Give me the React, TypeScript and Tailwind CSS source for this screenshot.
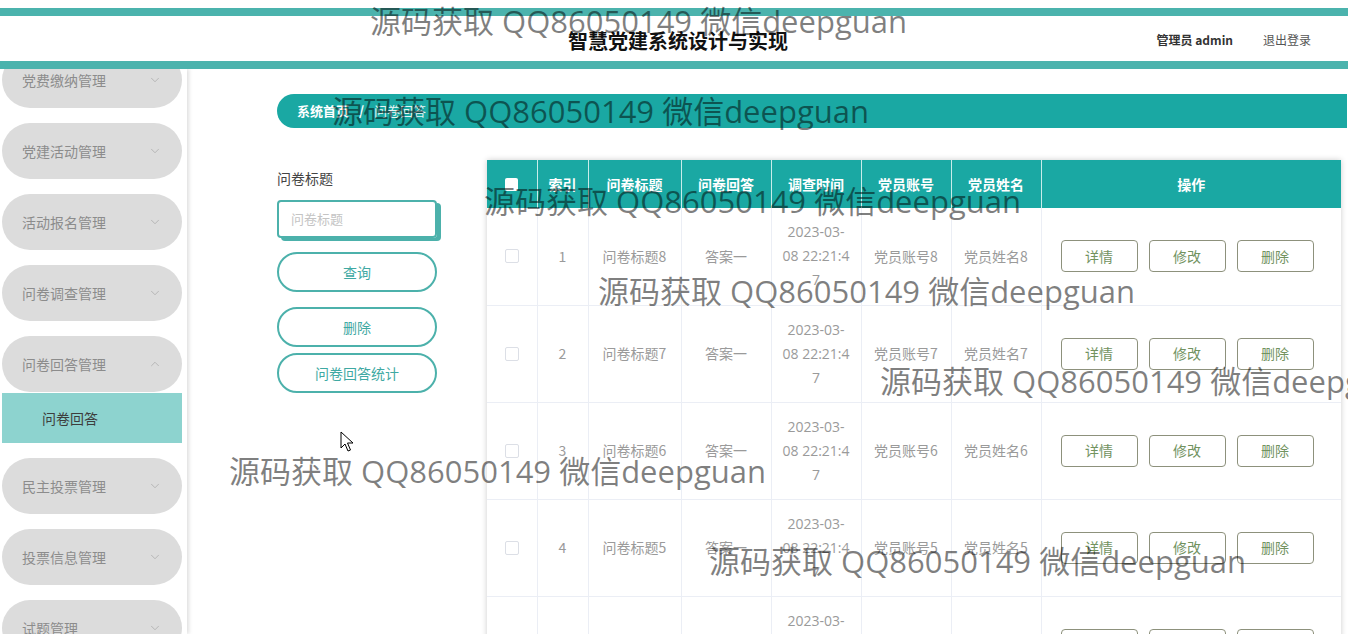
import React from "react";
import { ChevronDown, ChevronUp } from "lucide-react";

const FONT = { fontFamily: '"Open Sans","Noto Sans CJK SC",sans-serif' };
const CJK = { fontFamily: '"Noto Sans CJK SC","Noto Sans",sans-serif' };

const menu: { name: string; open?: boolean; sub?: string }[] = [
  { name: "党费缴纳管理" },
  { name: "党建活动管理" },
  { name: "活动报名管理" },
  { name: "问卷调查管理" },
  { name: "问卷回答管理", open: true, sub: "问卷回答" },
  { name: "民主投票管理" },
  { name: "投票信息管理" },
  { name: "试题管理" },
];

const rows = [
  { i: 1, t: "问卷标题8", a: "答案一", acc: "党员账号8", n: "党员姓名8" },
  { i: 2, t: "问卷标题7", a: "答案一", acc: "党员账号7", n: "党员姓名7" },
  { i: 3, t: "问卷标题6", a: "答案一", acc: "党员账号6", n: "党员姓名6" },
  { i: 4, t: "问卷标题5", a: "答案一", acc: "党员账号5", n: "党员姓名5" },
  { i: 5, t: "问卷标题4", a: "答案一", acc: "党员账号4", n: "党员姓名4" },
];

const heads = ["索引", "问卷标题", "问卷回答", "调查时间", "党员账号", "党员姓名"];

const marks = [
  { x: 370, y: 2 },
  { x: 332, y: 92 },
  { x: 484, y: 182 },
  { x: 598, y: 272 },
  { x: 880, y: 362 },
  { x: 229, y: 452 },
  { x: 709, y: 542 },
];

export default function App() {
  return (
    <div className="relative w-[1348px] h-[634px] overflow-hidden bg-white" style={CJK}>
      {/* Header */}
      <div className="h-[69px] pt-[8px] flex flex-col relative z-20 bg-white">
        <div className="h-[8px] bg-[#4bb3ad]" />
        <div className="h-[45px] flex items-center">
          <div className="w-[568px] shrink-0" />
          <div className="text-[20px] font-bold text-[#111] pt-[4px]">智慧党建系统设计与实现</div>
          <div className="flex-1 flex justify-end items-center pr-[37px] pt-[2px] text-[12px]">
            <span className="font-bold text-[#333]">管理员 admin</span>
            <span className="ml-[30px] text-[#555]">退出登录</span>
          </div>
        </div>
        <div className="h-[8px] bg-[#4bb3ad]" />
      </div>

      <div className="flex h-[565px]">
        {/* Sidebar */}
        <div className="w-[187px] shrink-0 h-full overflow-hidden bg-white shadow-[2px_0_4px_rgba(0,0,0,0.13)] relative z-10">
          <div className="mt-[-17px] flex flex-col">
            {menu.map((m) => (
              <div key={m.name} className="mb-[15px]">
                <div className="ml-[2px] w-[180px] h-[56px] rounded-full bg-[#dcdcdc] flex items-center pl-[20px] pr-[20px] justify-between">
                  <span className="text-[14px] text-[#8c8c8c]">{m.name}</span>
                  {m.open ? (
                    <ChevronUp size={14} strokeWidth={1.2} color="#a6a6a6" />
                  ) : (
                    <ChevronDown size={14} strokeWidth={1.2} color="#a6a6a6" />
                  )}
                </div>
                {m.sub && (
                  <div className="ml-[2px] mt-[1px] w-[180px] h-[50px] bg-[#8dd3cf] flex items-center pl-[40px] text-[14px] text-[#3d3d3d]">
                    {m.sub}
                  </div>
                )}
              </div>
            ))}
          </div>
        </div>

        {/* Main */}
        <div className="flex-1 pl-[90px] pr-[1px] pt-[25px]">
          <div className="h-[34px] bg-[#1aa8a3] rounded-l-full rounded-r-[8px] flex items-center pl-[20px] text-[13px] text-white">
            <span className="font-bold">系统首页</span>
            <span className="mx-[10px] font-bold">/</span>
            <span className="text-[#e6f5f4]">问卷回答</span>
          </div>

          <div className="flex mt-[32px]">
            {/* Search panel */}
            <div className="w-[160px] shrink-0 mr-[50px] pt-[8px] flex flex-col">
              <div className="text-[14px] text-[#444] leading-[20px]">问卷标题</div>
              <div className="mt-[12px] h-[38px] w-[160px] border-2 border-[#4cb1ab] rounded-[4px] shadow-[4px_3px_0_#4cb1ab] flex items-center pl-[12px] text-[13px] text-[#c4c4c4]">
                问卷标题
              </div>
              <div className="mt-[14px] h-[40px] rounded-full border-2 border-[#4cb1ab] flex items-center justify-center text-[14px] text-[#3fa9a3]">
                查询
              </div>
              <div className="mt-[15px] h-[40px] rounded-full border-2 border-[#4cb1ab] flex items-center justify-center text-[14px] text-[#3fa9a3]">
                删除
              </div>
              <div className="mt-[6px] h-[40px] rounded-full border-2 border-[#4cb1ab] flex items-center justify-center text-[14px] text-[#3fa9a3]">
                问卷回答统计
              </div>
            </div>

            {/* Table */}
            <div className="w-[854px] shrink-0 shadow-[0_0_6px_rgba(0,0,0,0.2)] bg-white">
              <table className="table-fixed w-[854px] border-collapse">
                <colgroup>
                  <col className="w-[50px]" />
                  <col className="w-[51px]" />
                  <col className="w-[93px]" />
                  <col className="w-[90px]" />
                  <col className="w-[90px]" />
                  <col className="w-[90px]" />
                  <col className="w-[90px]" />
                  <col className="w-[300px]" />
                </colgroup>
                <thead>
                  <tr className="h-[48px] bg-[#1aa8a3] text-white text-[14px] font-bold">
                    <th className="border-r border-[#c9ecea]">
                      <div className="mx-auto w-[13px] h-[13px] bg-white rounded-[2px]" />
                    </th>
                    {heads.map((h) => (
                      <th key={h} className="border-r border-[#c9ecea] font-bold">
                        {h}
                      </th>
                    ))}
                    <th className="font-bold">操作</th>
                  </tr>
                </thead>
                <tbody>
                  {rows.map((r) => (
                    <tr key={r.i} className="h-[97px] border-b border-[#ebeef5] text-[14px] text-[#9a9a9a] text-center">
                      <td className="border-r border-[#ebeef5]">
                        <div className="mx-auto w-[14px] h-[14px] border border-[#dcdfe6] rounded-[2px] bg-white" />
                      </td>
                      <td className="border-r border-[#ebeef5]">{r.i}</td>
                      <td className="border-r border-[#ebeef5]">{r.t}</td>
                      <td className="border-r border-[#ebeef5]">{r.a}</td>
                      <td className="border-r border-[#ebeef5] leading-[24px] whitespace-nowrap" style={FONT}>
                        <div className="text-[14px] text-[#9a9a9a]">2023-03-</div>
                        <div className="text-[14px] text-[#9a9a9a]">08 22:21:4</div>
                        <div className="text-[14px] text-[#9a9a9a]">7</div>
                      </td>
                      <td className="border-r border-[#ebeef5]">{r.acc}</td>
                      <td className="border-r border-[#ebeef5]">{r.n}</td>
                      <td>
                        <div className="flex gap-[11px] pl-[19px]">
                          {["详情", "修改", "删除"].map((b) => (
                            <div
                              key={b}
                              className="w-[77px] h-[32px] border border-[#8d917c] rounded-[4px] flex items-center justify-center text-[14px] text-[#72935f]"
                            >
                              {b}
                            </div>
                          ))}
                        </div>
                      </td>
                    </tr>
                  ))}
                </tbody>
              </table>
            </div>
          </div>
        </div>
      </div>

      {/* Watermarks */}
      {marks.map((m, k) => (
        <div
          key={k}
          className="absolute z-30 whitespace-nowrap text-[31px] leading-[38px] text-black/50 pointer-events-none"
          style={{ left: m.x, top: m.y, ...FONT }}
        >
          源码获取 QQ86050149 微信deepguan
        </div>
      ))}

      {/* Cursor */}
      <svg className="absolute z-40" style={{ left: 340, top: 431 }} width="14" height="21" viewBox="0 0 14 21">
        <path d="M1 1 L1 17 L5 13 L8 20 L10.5 19 L7.5 12 L13 12 Z" fill="white" stroke="black" strokeWidth="1" strokeLinejoin="round" />
      </svg>
    </div>
  );
}
